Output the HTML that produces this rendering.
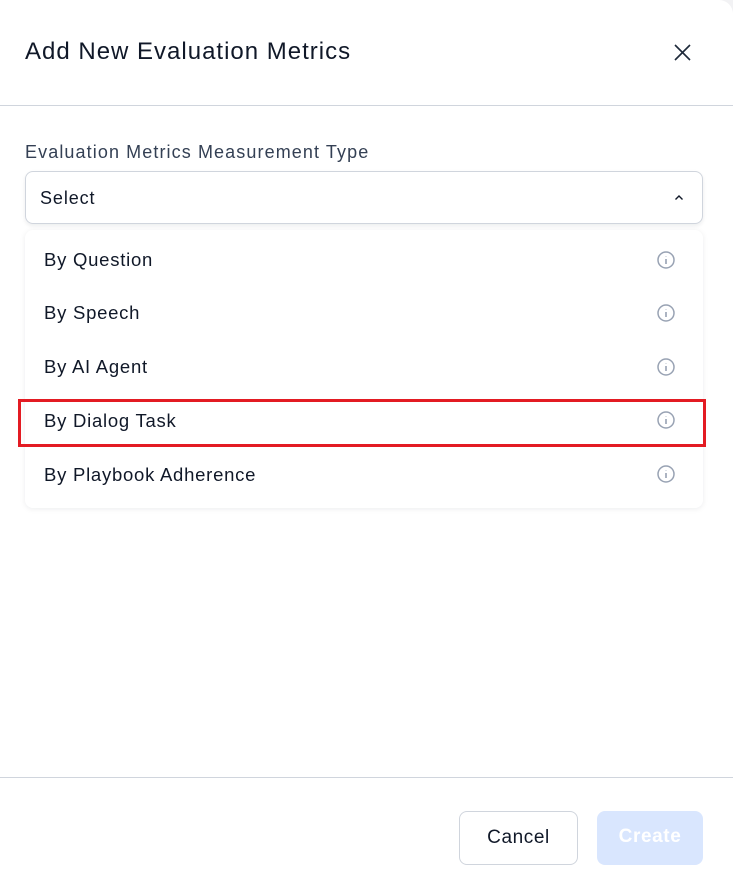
<!DOCTYPE html>
<html><head><style>
*{margin:0;padding:0;box-sizing:border-box}
html,body{width:733px;height:877px;background:#f2f2f4;overflow:hidden}
body{font-family:"Liberation Sans",sans-serif;position:relative}
.modal{position:absolute;left:0;top:0;width:733px;height:877px;background:#fff;border-top-right-radius:14px}
.title{position:absolute;left:25px;top:38px;font-size:24px;color:#101828;letter-spacing:1px}
.hr{position:absolute;left:0;width:733px;height:1px;background:#d0d5dd}
.label{position:absolute;left:25px;top:142px;font-size:18px;color:#344054;letter-spacing:1.1px}
.sel{position:absolute;left:25px;top:171px;width:678px;height:53px;border:1px solid #d0d5dd;border-radius:8px;box-shadow:0 2px 4px rgba(16,24,40,.08)}
.sel span{position:absolute;left:14px;top:16px;font-size:18px;color:#101828;letter-spacing:0.9px}
.panel{position:absolute;left:25px;top:230px;width:678px;height:278px;border-radius:8px;box-shadow:0 1px 6px rgba(16,24,40,.08);background:#fff}
.row{position:absolute;left:44px;font-size:18.5px;color:#101828;letter-spacing:0.75px}
.ic{position:absolute;left:657px}
.red{position:absolute;left:18px;top:399px;width:688px;height:48px;border:3px solid #e31b23}
.btn{position:absolute;top:811px;height:54px;border-radius:8px;font-size:19px;text-align:center;line-height:52px;letter-spacing:0.6px}
</style></head><body>
<div class="modal">
<div class="title">Add New Evaluation Metrics</div>
<svg style="position:absolute;left:673px;top:43px" width="19" height="19" viewBox="0 0 19 19"><path d="M2 2L17 17M17 2L2 17" stroke="#1d2939" stroke-width="1.6"/></svg>
<div class="hr" style="top:105px"></div>
<div class="label">Evaluation Metrics Measurement Type</div>
<div class="sel"><span>Select</span>
<svg style="position:absolute;left:648px;top:22px" width="10" height="7" viewBox="0 0 10 7"><path d="M1.5 5.5L5 2L8.5 5.5" stroke="#101828" stroke-width="1.4" fill="none"/></svg></div>
<div class="panel"></div>
<div class="row" style="top:249px">By Question</div>
<div class="row" style="top:302px">By Speech</div>
<div class="row" style="top:356px">By AI Agent</div>
<div class="row" style="top:410px">By Dialog Task</div>
<div class="row" style="top:464px">By Playbook Adherence</div>
<svg class="ic" style="top:251px" width="18" height="18" viewBox="0 0 18 18"><circle cx="9" cy="9" r="8" fill="none" stroke="#98a2b3" stroke-width="1.5"/><path d="M9 8v5M9 5.2v.4" stroke="#98a2b3" stroke-width="1.6"/></svg>
<svg class="ic" style="top:304px" width="18" height="18" viewBox="0 0 18 18"><circle cx="9" cy="9" r="8" fill="none" stroke="#98a2b3" stroke-width="1.5"/><path d="M9 8v5M9 5.2v.4" stroke="#98a2b3" stroke-width="1.6"/></svg>
<svg class="ic" style="top:358px" width="18" height="18" viewBox="0 0 18 18"><circle cx="9" cy="9" r="8" fill="none" stroke="#98a2b3" stroke-width="1.5"/><path d="M9 8v5M9 5.2v.4" stroke="#98a2b3" stroke-width="1.6"/></svg>
<svg class="ic" style="top:411px" width="18" height="18" viewBox="0 0 18 18"><circle cx="9" cy="9" r="8" fill="none" stroke="#98a2b3" stroke-width="1.5"/><path d="M9 8v5M9 5.2v.4" stroke="#98a2b3" stroke-width="1.6"/></svg>
<svg class="ic" style="top:465px" width="18" height="18" viewBox="0 0 18 18"><circle cx="9" cy="9" r="8" fill="none" stroke="#98a2b3" stroke-width="1.5"/><path d="M9 8v5M9 5.2v.4" stroke="#98a2b3" stroke-width="1.6"/></svg>
<div class="red"></div>
<div class="hr" style="top:777px"></div>
<div class="btn" style="left:459px;width:119px;border:1px solid #d0d5dd;color:#101828;background:#fff">Cancel</div>
<div class="btn" style="left:597px;width:106px;background:#d9e6fe;color:#fff;font-weight:bold">Create</div>
</div>
</body></html>
